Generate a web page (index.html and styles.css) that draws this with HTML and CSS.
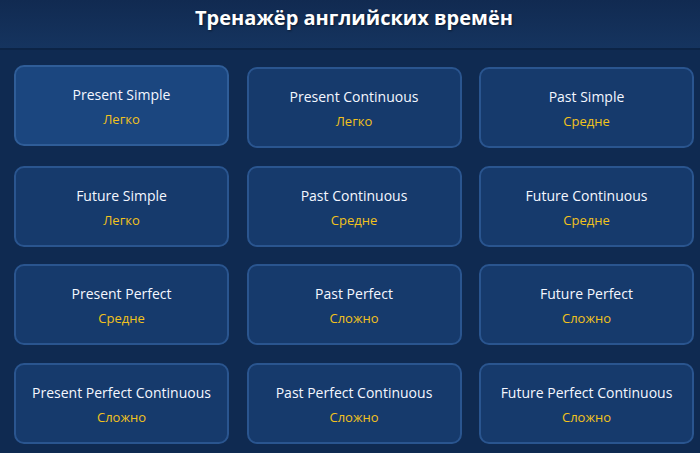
FILE: index.html
```html
<!DOCTYPE html>
<html lang="ru">
<head>
<meta charset="utf-8">
<title>Тренажёр английских времён</title>
<link rel="stylesheet" href="styles.css">
</head>
<body>
<header class="top">
  <h1 class="title">Тренажёр английских времён</h1>
</header>
<main class="grid">
  <div class="card card-active"><div class="name">Present Simple</div><div class="level">Легко</div></div>
  <div class="card"><div class="name">Present Continuous</div><div class="level">Легко</div></div>
  <div class="card"><div class="name">Past Simple</div><div class="level">Средне</div></div>
  <div class="card"><div class="name">Future Simple</div><div class="level">Легко</div></div>
  <div class="card"><div class="name">Past Continuous</div><div class="level">Средне</div></div>
  <div class="card"><div class="name">Future Continuous</div><div class="level">Средне</div></div>
  <div class="card"><div class="name">Present Perfect</div><div class="level">Средне</div></div>
  <div class="card"><div class="name">Past Perfect</div><div class="level">Сложно</div></div>
  <div class="card"><div class="name">Future Perfect</div><div class="level">Сложно</div></div>
  <div class="card"><div class="name">Present Perfect Continuous</div><div class="level">Сложно</div></div>
  <div class="card"><div class="name">Past Perfect Continuous</div><div class="level">Сложно</div></div>
  <div class="card"><div class="name">Future Perfect Continuous</div><div class="level">Сложно</div></div>
</main>
</body>
</html>
```
FILE: styles.css
```css
* { box-sizing: border-box; }
html, body {
  margin: 0;
  padding: 0;
  background: #0f2a51;
  font-family: "Open Sans", "Noto Sans", sans-serif;
  color: #f2f6ff;
  height: 100%;
  overflow: hidden;
}
.top {
  height: 50px;
  background: linear-gradient(180deg, #112a51 0%, #15345f 100%);
  border-bottom: 2px solid #0c2446;
  display: flex;
  justify-content: center;
  padding: 4px 0 0 8px;
}
.title {
  margin: 0;
  font-size: 20px;
  font-weight: 700;
  line-height: 28px;
  color: #ffffff;
  text-shadow: 1px 1px 2px rgba(0, 0, 0, 0.45);
}
.grid {
  display: grid;
  grid-template-columns: repeat(3, 215px);
  grid-auto-rows: 81px;
  column-gap: 17.5px;
  row-gap: 17.5px;
  padding: 17px 0 0 14px;
}
.card {
  background: #163a6c;
  border: 2px solid #2a558f;
  border-radius: 10px;
  display: flex;
  flex-direction: column;
  align-items: center;
  justify-content: center;
  gap: 7px;
  padding-top: 2px;
}
.card-active {
  background: #1b467f;
  border-color: #2f5d98;
  transform: translateY(-2px);
}
.name {
  font-size: 14px;
  line-height: 19px;
  color: #f4f7ff;
}
.level {
  font-size: 13px;
  line-height: 17px;
  color: #f2c21c;
}
```
